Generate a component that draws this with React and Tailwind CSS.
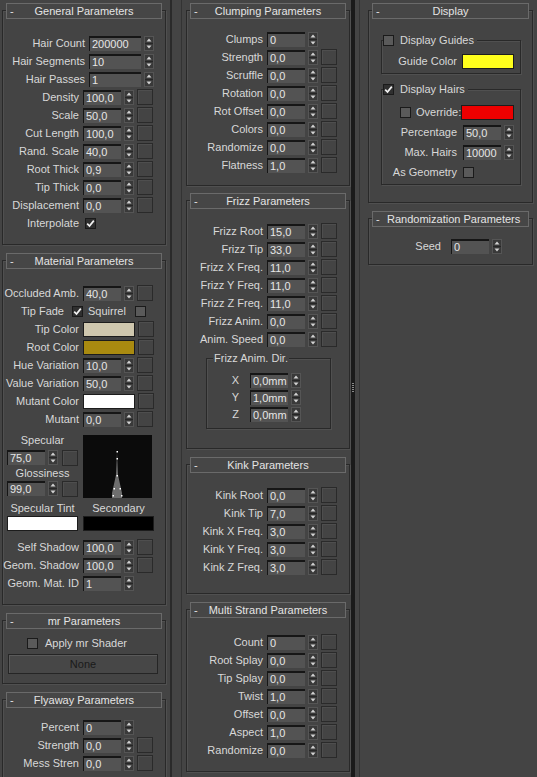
import React from 'react';

// 3ds Max hair & fur rollouts, three columns

function Spinner() {
  return (
    <svg width="10" height="15" viewBox="0 0 10 15" className="shrink-0">
      <rect x="0.5" y="0.5" width="9" height="14" fill="#393939" stroke="#555" />
      <rect x="1" y="7" width="8" height="1" fill="#262626" />
      <path d="M5 2.5 L7.5 5.5 L2.5 5.5 Z" fill="#d2d2d2" />
      <path d="M2.5 9.5 L7.5 9.5 L5 12.5 Z" fill="#d2d2d2" />
    </svg>
  );
}

function Field({ value, w = 'w-[38px]' }) {
  return (
    <div className={`${w} h-[15px] shrink-0 overflow-hidden border-t-2 border-l border-[#161616] bg-[#535353] pl-[2px] text-[11px] leading-[13px] text-[#e6e6e6]`}>
      {value}
    </div>
  );
}

function MapBtn() {
  return <div className="ml-[3px] h-[16px] w-[16px] shrink-0 border border-[#2a2a2a] shadow-[inset_1px_1px_0_#4e4e4e]" />;
}

function Check({ checked }) {
  return (
    <div className={`flex h-[11px] w-[11px] shrink-0 items-center justify-center border border-[#1a1a1a] ${checked ? 'bg-[#2f2f2f]' : 'bg-[#5a5a5a]'}`}>
      {checked && (
        <svg width="9" height="9" viewBox="0 0 9 9">
          <path d="M1.2 4.6 L3.5 7 L7.8 1.6" fill="none" stroke="#f2f2f2" strokeWidth="1.7" />
        </svg>
      )}
    </div>
  );
}

function Swatch({ color, w = 'w-[52px]' }) {
  return <div className={`${w} h-[15px] shrink-0 border border-[#1c1c1c]`} style={{ background: color }} />;
}

function Row({ label, value, btn, lw = 'w-[76px]', fw = 'w-[38px]', gap = 'ml-[4px]', h = 'h-[18px]' }) {
  return (
    <div className={`flex ${h} items-center`}>
      <span className={`${lw} shrink-0 whitespace-nowrap text-right`}>{label}</span>
      <div className={`${gap} flex items-center`}>
        <Field value={value} w={fw} />
        <div className="ml-[3px]">
          <Spinner />
        </div>
        {btn && <MapBtn />}
      </div>
    </div>
  );
}

function Rollout({ title, className = '', body = '', children }) {
  return (
    <div className={`border border-[#292929] shadow-[inset_1px_1px_0_#505050,1px_1px_0_#505050] ${className}`}>
      <div className="-mt-[8px] mx-[3px] grid h-[16px] grid-cols-[14px_1fr_14px] items-center border border-[#6a6a6a] bg-[#464646] text-[11px] text-[#e4e4e4]">
        <span className="pl-[3px] leading-none">-</span>
        <span className="whitespace-nowrap text-center leading-none">{title}</span>
        <span />
      </div>
      <div className={body}>{children}</div>
    </div>
  );
}

function SpecGraph() {
  return (
    <svg width="69" height="63" viewBox="0 0 69 63" className="ml-[5px] mt-[2px] shrink-0">
      <rect width="69" height="63" fill="#0b0b0b" />
      <path d="M34 17 L35 40 L39 58 L39 63 L29 63 L29 58 L33 40 Z" fill="#6e6e6e" />
      <rect x="33.5" y="16" width="1.5" height="1.5" fill="#fff" />
      <rect x="33.5" y="23" width="1.5" height="1.5" fill="#fff" />
      <rect x="33.5" y="40" width="1.5" height="1.5" fill="#fff" />
      <rect x="30.5" y="53" width="1.5" height="1.5" fill="#fff" />
      <rect x="36.5" y="53" width="1.5" height="1.5" fill="#fff" />
      <rect x="29.5" y="60" width="1.5" height="1.5" fill="#fff" />
      <rect x="38" y="60" width="1.5" height="1.5" fill="#fff" />
    </svg>
  );
}

const clumping = [
  ['Clumps', '0', false],
  ['Strength', '0,0', true],
  ['Scruffle', '0,0', true],
  ['Rotation', '0,0', true],
  ['Rot Offset', '0,0', true],
  ['Colors', '0,0', true],
  ['Randomize', '0,0', true],
  ['Flatness', '1,0', true],
];

const frizz = [
  ['Frizz Root', '15,0'],
  ['Frizz Tip', '33,0'],
  ['Frizz X Freq.', '11,0'],
  ['Frizz Y Freq.', '11,0'],
  ['Frizz Z Freq.', '11,0'],
  ['Frizz Anim.', '0,0'],
  ['Anim. Speed', '0,0'],
];

const kink = [
  ['Kink Root', '0,0'],
  ['Kink Tip', '7,0'],
  ['Kink X Freq.', '3,0'],
  ['Kink Y Freq.', '3,0'],
  ['Kink Z Freq.', '3,0'],
];

const multi = [
  ['Count', '0'],
  ['Root Splay', '0,0'],
  ['Tip Splay', '0,0'],
  ['Twist', '1,0'],
  ['Offset', '0,0'],
  ['Aspect', '1,0'],
  ['Randomize', '0,0'],
];

export default function App() {
  return (
    <div className="flex h-[777px] w-[537px] overflow-hidden bg-[#444444] font-['Liberation_Sans',Arial,sans-serif] text-[11px] text-[#d8d8d8]">
      {/* left column */}
      <div className="w-[168px] shrink-0 pl-[2px] pt-[10px]">
        <div className="w-[164px]">
          <Rollout title="General Parameters" body="pt-[15px] pb-[12px]">
            <Row label="Hair Count" value="200000" lw="w-[82px]" fw="w-[52px]" />
            <Row label="Hair Segments" value="10" lw="w-[82px]" fw="w-[52px]" />
            <Row label="Hair Passes" value="1" lw="w-[82px]" fw="w-[52px]" />
            <Row label="Density" value="100,0" btn />
            <Row label="Scale" value="50,0" btn />
            <Row label="Cut Length" value="100,0" btn />
            <Row label="Rand. Scale" value="40,0" btn />
            <Row label="Root Thick" value="0,9" btn />
            <Row label="Tip Thick" value="0,0" btn />
            <Row label="Displacement" value="0,0" btn />
            <div className="flex h-[18px] items-center">
              <span className="w-[76px] text-right">Interpolate</span>
              <div className="ml-[6px]">
                <Check checked />
              </div>
            </div>
          </Rollout>

          <Rollout title="Material Parameters" className="mt-[15px]" body="pt-[15px] pb-[12px]">
            <Row label="Occluded Amb." value="40,0" btn />
            <div className="flex h-[18px] items-center">
              <span className="w-[61px] text-right">Tip Fade</span>
              <div className="ml-[8px]">
                <Check checked />
              </div>
              <span className="ml-[5px]">Squirrel</span>
              <div className="ml-[9px]">
                <Check />
              </div>
            </div>
            <div className="flex h-[18px] items-center">
              <span className="w-[76px] text-right">Tip Color</span>
              <div className="ml-[4px]">
                <Swatch color="#cfc7ae" />
              </div>
              <MapBtn />
            </div>
            <div className="flex h-[18px] items-center">
              <span className="w-[76px] text-right">Root Color</span>
              <div className="ml-[4px]">
                <Swatch color="#a98a10" />
              </div>
              <MapBtn />
            </div>
            <Row label="Hue Variation" value="10,0" btn />
            <Row label="Value Variation" value="50,0" btn />
            <div className="flex h-[18px] items-center">
              <span className="w-[76px] text-right">Mutant Color</span>
              <div className="ml-[4px]">
                <Swatch color="#ffffff" />
              </div>
              <MapBtn />
            </div>
            <Row label="Mutant" value="0,0" btn />

            <div className="flex pt-[5px]">
              <div className="ml-[4px] w-[71px]">
                <div className="h-[14px] text-center leading-[14px]">Specular</div>
                <div className="mt-[3px] flex h-[15px] items-center">
                  <Field value="75,0" />
                  <div className="ml-[3px]">
                    <Spinner />
                  </div>
                  <div className="ml-[1px]">
                    <MapBtn />
                  </div>
                </div>
                <div className="mt-[1px] h-[14px] text-center leading-[14px]">Glossiness</div>
                <div className="mt-[1px] flex h-[15px] items-center">
                  <Field value="99,0" />
                  <div className="ml-[3px]">
                    <Spinner />
                  </div>
                  <div className="ml-[1px]">
                    <MapBtn />
                  </div>
                </div>
              </div>
              <SpecGraph />
            </div>
            <div className="mt-[3px] flex h-[14px] leading-[14px]">
              <span className="ml-[4px] w-[71px] text-center">Specular Tint</span>
              <span className="ml-[5px] w-[71px] text-center">Secondary</span>
            </div>
            <div className="mt-[1px] flex h-[15px]">
              <div className="ml-[4px] w-[71px] border border-[#1c1c1c] bg-white" />
              <div className="ml-[5px] w-[71px] border border-[#1c1c1c] bg-black" />
            </div>
            <div className="mt-[7px]">
              <Row label="Self Shadow" value="100,0" btn />
              <Row label="Geom. Shadow" value="100,0" btn />
              <Row label="Geom. Mat. ID" value="1" />
            </div>
          </Rollout>

          <Rollout title="mr Parameters" className="mt-[15px]" body="pt-[7px] pb-[9px]">
            <div className="flex h-[14px] items-center">
              <div className="ml-[24px]">
                <Check />
              </div>
              <span className="ml-[7px]">Apply mr Shader</span>
            </div>
            <div className="ml-[5px] mr-[7px] mt-[4px] flex h-[20px] items-center justify-center border border-[#252525] bg-[#474747] text-[#1a1a1a] shadow-[inset_1px_1px_0_#5a5a5a]">
              None
            </div>
          </Rollout>

          <Rollout title="Flyaway Parameters" className="mt-[15px]" body="pt-[10px] pb-[12px]">
            <Row label="Percent" value="0" />
            <Row label="Strength" value="0,0" btn />
            <Row label="Mess Stren" value="0,0" btn />
          </Rollout>
        </div>
      </div>

      {/* divider */}
      <div className="flex w-[18px] shrink-0">
        <div className="ml-[2px] w-[2px] bg-[#2a2a2a]" />
        <div className="ml-[9px] w-[1px] bg-[#333333]" />
      </div>

      {/* middle column */}
      <div className="w-[164px] shrink-0 pt-[10px]">
        <Rollout title="Clumping Parameters" body="pt-[11px] pb-[11px]">
          {clumping.map(([l, v, b]) => (
            <Row key={l} label={l} value={v} btn={b} />
          ))}
        </Rollout>

        <Rollout title="Frizz Parameters" className="mt-[14px]" body="pt-[13px] pb-[19px]">
          {frizz.map(([l, v]) => (
            <Row key={l} label={l} value={v} btn />
          ))}
          <div className="ml-[19px] mr-[18px] mt-[10px] border border-[#292929] pb-[5px] shadow-[inset_1px_1px_0_#505050,1px_1px_0_#505050]">
            <div className="-mt-[7px] ml-[6px] flex h-[13px]">
              <span className="bg-[#444444] px-[1px] leading-[13px]">Frizz Anim. Dir.</span>
            </div>
            <div className="mt-[7px]">
              <Row label="X" value="0,0mm" lw="w-[32px]" gap="ml-[11px]" h="h-[17px]" />
              <Row label="Y" value="1,0mm" lw="w-[32px]" gap="ml-[11px]" h="h-[17px]" />
              <Row label="Z" value="0,0mm" lw="w-[32px]" gap="ml-[11px]" h="h-[17px]" />
            </div>
          </div>
        </Rollout>

        <Rollout title="Kink Parameters" className="mt-[15px]" body="pt-[13px] pb-[17px]">
          {kink.map(([l, v]) => (
            <Row key={l} label={l} value={v} btn />
          ))}
        </Rollout>

        <Rollout title="Multi Strand Parameters" className="mt-[15px]" body="pt-[15px] pb-[12px]">
          {multi.map(([l, v]) => (
            <Row key={l} label={l} value={v} btn />
          ))}
        </Rollout>
      </div>

      {/* divider with grip */}
      <div className="flex w-[18px] shrink-0">
        <div className="ml-[1px] flex w-[4px] flex-col items-center bg-[#1a1a1a] pt-[383px]">
          <div className="mb-[1px] h-[1px] w-[2px] bg-[#8a8a8a]" />
          <div className="mb-[1px] h-[1px] w-[2px] bg-[#8a8a8a]" />
          <div className="mb-[1px] h-[1px] w-[2px] bg-[#8a8a8a]" />
          <div className="mb-[1px] h-[1px] w-[2px] bg-[#8a8a8a]" />
          <div className="mb-[1px] h-[1px] w-[2px] bg-[#8a8a8a]" />
        </div>
        <div className="ml-[4px] w-[1px] bg-[#333333]" />
      </div>

      {/* right column */}
      <div className="w-[165px] shrink-0 pt-[10px]">
        <Rollout title="Display" body="pb-[17px]">
          <div className="ml-[12px] mr-[11px] mt-[21px] border border-[#292929] pb-[4px] shadow-[inset_1px_1px_0_#505050,1px_1px_0_#505050]">
            <div className="-mt-[7px] ml-[1px] flex h-[13px] w-fit items-center bg-[#444444] pr-[3px]">
              <Check />
              <span className="ml-[6px]">Display Guides</span>
            </div>
            <div className="mt-[6px] flex h-[16px] items-center">
              <span className="w-[75px] text-right">Guide Color</span>
              <div className="ml-[5px]">
                <Swatch color="#ffff1c" />
              </div>
            </div>
          </div>

          <div className="ml-[12px] mr-[11px] mt-[15px] border border-[#292929] pb-[4px] shadow-[inset_1px_1px_0_#505050,1px_1px_0_#505050]">
            <div className="-mt-[7px] ml-[1px] flex h-[13px] w-fit items-center bg-[#444444] pr-[3px]">
              <Check checked />
              <span className="ml-[6px]">Display Hairs</span>
            </div>
            <div className="mt-[8px] flex h-[16px] items-center">
              <div className="ml-[18px]">
                <Check />
              </div>
              <span className="ml-[5px] w-[45px]">Override:</span>
              <Swatch color="#ee0000" w="w-[53px]" />
            </div>
            <div className="mt-[4px]">
              <Row label="Percentage" value="50,0" lw="w-[75px]" gap="ml-[6px]" h="h-[16px]" />
            </div>
            <div className="mt-[4px]">
              <Row label="Max. Hairs" value="10000" lw="w-[75px]" gap="ml-[6px]" h="h-[16px]" />
            </div>
            <div className="mt-[4px] flex h-[16px] items-center">
              <span className="w-[75px] text-right">As Geometry</span>
              <div className="ml-[6px]">
                <Check />
              </div>
            </div>
          </div>
        </Rollout>

        <Rollout title="Randomization Parameters" className="mt-[15px]" body="pt-[10px] pb-[9px]">
          <Row label="Seed" value="0" lw="w-[72px]" gap="ml-[10px]" />
        </Rollout>
      </div>
    </div>
  );
}
